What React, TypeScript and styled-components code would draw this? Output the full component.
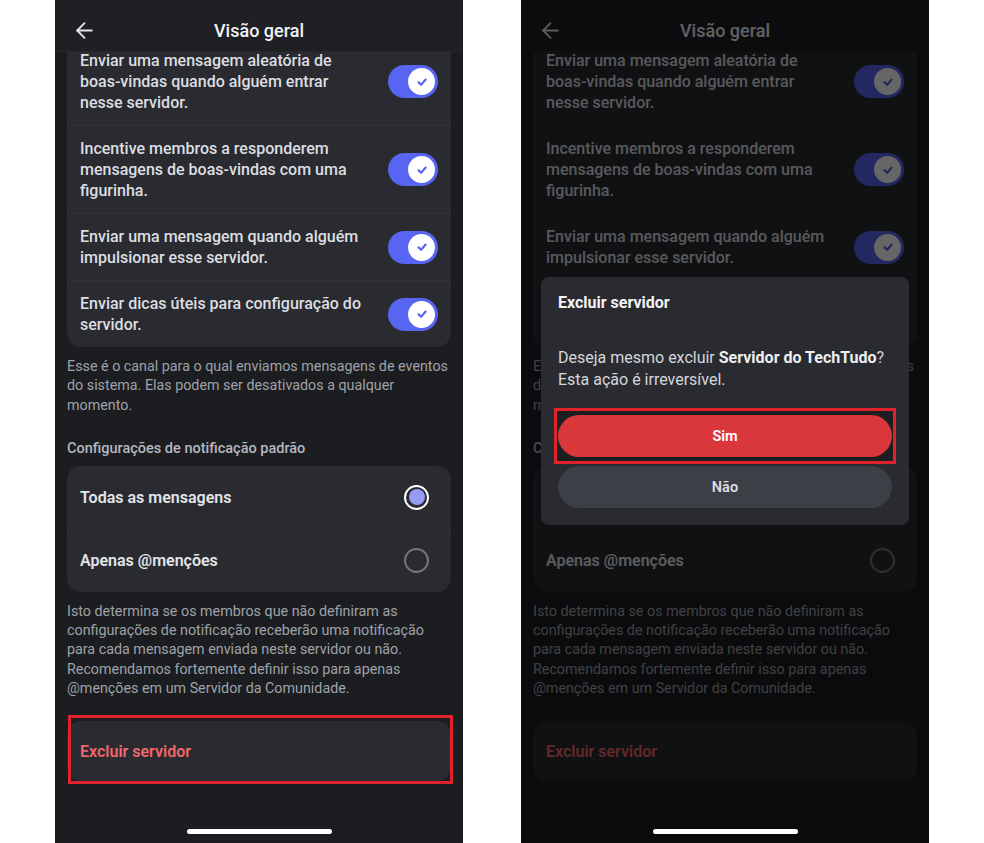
import React from 'react'
import styled, { createGlobalStyle } from 'styled-components'
import { ArrowLeft } from 'lucide-react'

const toggles = [
  'Enviar uma mensagem aleatória de boas-vindas quando alguém entrar nesse servidor.',
  'Incentive membros a responderem mensagens de boas-vindas com uma figurinha.',
  'Enviar uma mensagem quando alguém impulsionar esse servidor.',
  'Enviar dicas úteis para configuração do servidor.',
]

const radios = [
  { label: 'Todas as mensagens', checked: true },
  { label: 'Apenas @menções', checked: false },
]

const CheckMark = () => (
  <svg width="14" height="14" viewBox="0 0 16 16" fill="none">
    <path d="M4 8.4 L7 11.2 L12.2 5.2" stroke="#5865f2" strokeWidth="2.5" strokeLinecap="round" strokeLinejoin="round" />
  </svg>
)

const SettingsScreen = ({ highlightDelete }: { highlightDelete?: boolean }) => (
  <>
    <Header>
      <BackButton>
        <ArrowLeft size={25} strokeWidth={1.8} color="#e3e5e8" />
      </BackButton>
      <Title>Visão geral</Title>
      <span />
    </Header>

    <Content>
      <Card $cutTop>
        {toggles.map((text, i) => (
          <ToggleRow key={i} $first={i === 0}>
            <RowText>{text}</RowText>
            <Toggle>
              <Knob>
                <CheckMark />
              </Knob>
            </Toggle>
          </ToggleRow>
        ))}
      </Card>

      <Helper>
        Esse é o canal para o qual enviamos mensagens de eventos do sistema. Elas podem ser desativados a qualquer momento.
      </Helper>

      <SectionLabel>Configurações de notificação padrão</SectionLabel>

      <Card>
        {radios.map(r => (
          <RadioRow key={r.label}>
            <RadioText>{r.label}</RadioText>
            <Radio $checked={r.checked} />
          </RadioRow>
        ))}
      </Card>

      <Helper>
        Isto determina se os membros que não definiram as configurações de notificação receberão uma notificação para cada mensagem enviada neste servidor ou não. Recomendamos fortemente definir isso para apenas @menções em um Servidor da Comunidade.
      </Helper>

      <DeleteCard $highlight={highlightDelete}>Excluir servidor</DeleteCard>
    </Content>

    <HomeIndicator />
  </>
)

export default () => {
  return (
    <Page>
      <GlobalStyle />
      <Phone>
        <SettingsScreen highlightDelete />
      </Phone>

      <Phone>
        <SettingsScreen />
        <Overlay>
          <Dialog>
            <DialogTitle>Excluir servidor</DialogTitle>
            <DialogBody>
              Deseja mesmo excluir <strong>Servidor do TechTudo</strong>? Esta ação é irreversível.
            </DialogBody>
            <HighlightFrame>
              <DialogButton $variant="danger">Sim</DialogButton>
            </HighlightFrame>
            <DialogButton $variant="secondary">Não</DialogButton>
          </Dialog>
        </Overlay>
      </Phone>
    </Page>
  )
}

const GlobalStyle = createGlobalStyle`
  html, body {
    margin: 0;
    padding: 0;
    background: #ffffff;
  }
  body {
    font-family: Roboto, "Noto Sans", sans-serif;
    -webkit-font-smoothing: antialiased;
  }
`

const Page = styled.div`
  width: 984px;
  height: 843px;
  display: flex;
  justify-content: center;
  gap: 58px;
  background: #ffffff;
`

const Phone = styled.div`
  position: relative;
  width: 408px;
  height: 843px;
  display: flex;
  flex-direction: column;
  overflow: hidden;
  background: #1c1d21;
`

const Header = styled.header`
  height: 52px;
  flex-shrink: 0;
  display: grid;
  grid-template-columns: 56px 1fr 56px;
  align-items: center;
  background: #1f2024;
  border-bottom: 1px solid #26272b;
  box-sizing: border-box;
  position: relative;
  z-index: 1;
`

const BackButton = styled.div`
  display: flex;
  align-items: center;
  padding-left: 17px;
  padding-top: 9px;
`

const Title = styled.h1`
  margin: 0;
  text-align: center;
  font-size: 18px;
  font-weight: 500;
  color: #f2f3f5;
  padding-top: 9px;
`

const Content = styled.div`
  flex: 1;
  display: flex;
  flex-direction: column;
  padding: 0 12px;
`

const Card = styled.div<{ $cutTop?: boolean }>`
  background: #2a2b30;
  border-radius: ${p => (p.$cutTop ? '0 0 14px 14px' : '14px')};
  display: flex;
  flex-direction: column;
  overflow: hidden;
`

const ToggleRow = styled.div<{ $first?: boolean }>`
  display: flex;
  align-items: center;
  gap: 16px;
  padding: ${p => (p.$first ? '0 13px 12px' : '12px 13px')};
  margin-top: ${p => (p.$first ? '-2px' : '0')};
  & + & {
    border-top: 1px solid #313238;
  }
`

const RowText = styled.div`
  flex: 1;
  font-size: 16px;
  line-height: 21px;
  font-weight: 500;
  color: #dcdee2;
`

const Toggle = styled.div`
  width: 50px;
  height: 33px;
  flex-shrink: 0;
  border-radius: 17px;
  background: #5865f2;
  display: flex;
  align-items: center;
  justify-content: flex-end;
  padding: 0 3px;
  box-sizing: border-box;
`

const Knob = styled.div`
  width: 27px;
  height: 27px;
  border-radius: 50%;
  background: #ffffff;
  display: flex;
  align-items: center;
  justify-content: center;
`

const Helper = styled.p`
  margin: 10px 0 0;
  font-size: 14.3px;
  line-height: 19.3px;
  color: #9fa2a8;
`

const SectionLabel = styled.div`
  margin: 24px 0 8px;
  font-size: 14.5px;
  line-height: 19px;
  font-weight: 500;
  color: #b5b8be;
`

const RadioRow = styled.div`
  height: 62.5px;
  display: flex;
  align-items: center;
  justify-content: space-between;
  padding: 0 22px 0 13px;
  & + & {
    border-top: 1px solid #2e2f34;
  }
`

const RadioText = styled.div`
  font-size: 16px;
  font-weight: 600;
  color: #e3e5e8;
`

const Radio = styled.div<{ $checked: boolean }>`
  width: 25px;
  height: 25px;
  box-sizing: border-box;
  border-radius: 50%;
  border: 2px solid ${p => (p.$checked ? '#ffffff' : '#74767d')};
  padding: 2.5px;
  &::before {
    content: '';
    display: ${p => (p.$checked ? 'block' : 'none')};
    width: 100%;
    height: 100%;
    border-radius: 50%;
    background: #949cf7;
  }
`

const DeleteCard = styled.div<{ $highlight?: boolean }>`
  position: relative;
  margin-top: 23px;
  height: 60px;
  display: flex;
  align-items: center;
  padding: 0 13px;
  border-radius: 14px;
  background: #2a2b30;
  font-size: 16px;
  font-weight: 600;
  color: #f0676c;
  &::after {
    content: '';
    display: ${p => (p.$highlight ? 'block' : 'none')};
    position: absolute;
    top: -6px;
    bottom: -3px;
    left: 1px;
    right: -2px;
    border: 3px solid #e0222c;
  }
`

const HomeIndicator = styled.div`
  position: relative;
  z-index: 3;
  width: 145px;
  height: 5px;
  border-radius: 3px;
  background: #ffffff;
  align-self: center;
  margin: 0 0 9px;
  flex-shrink: 0;
`

const Overlay = styled.div`
  position: absolute;
  inset: 0;
  z-index: 2;
  background: rgba(0, 0, 0, 0.6);
  display: flex;
  flex-direction: column;
  padding: 277px 20px 0;
`

const Dialog = styled.div`
  background: #2a2b30;
  border-radius: 8px;
  padding: 16px 17px 17px;
  display: flex;
  flex-direction: column;
`

const DialogTitle = styled.div`
  font-size: 16px;
  line-height: 20px;
  font-weight: 700;
  color: #f2f3f5;
`

const DialogBody = styled.p`
  margin: 34px 0 17px;
  font-size: 16px;
  line-height: 22px;
  color: #d5d7db;
  strong {
    font-weight: 700;
    color: #eceef0;
  }
`

const HighlightFrame = styled.div`
  margin: 0 -4px 2px;
  padding: 4px 1px;
  border: 3px solid #e0222c;
  background: #1d1e21;
`

const DialogButton = styled.div<{ $variant: 'danger' | 'secondary' }>`
  height: 42px;
  border-radius: 21px;
  display: flex;
  align-items: center;
  justify-content: center;
  font-size: 14.5px;
  font-weight: 600;
  background: ${p => (p.$variant === 'danger' ? '#da373c' : '#3d3f46')};
  color: ${p => (p.$variant === 'danger' ? '#ffffff' : '#dcdee2')};
`
